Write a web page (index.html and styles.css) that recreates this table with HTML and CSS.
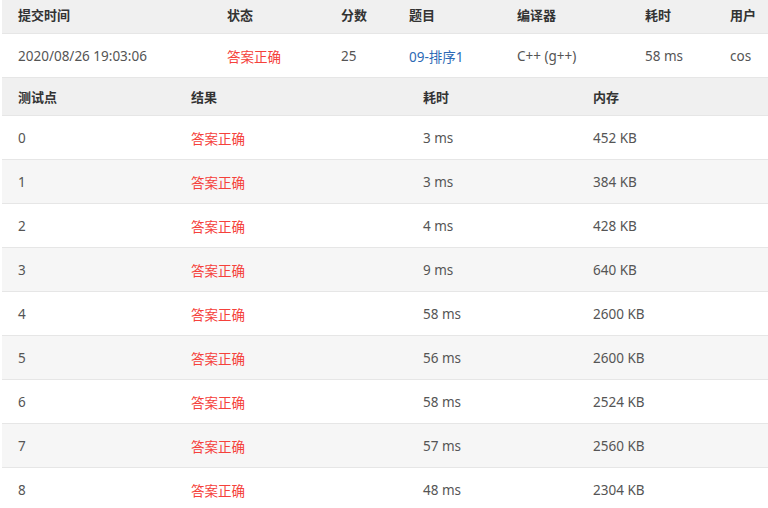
FILE: index.html
```html
<!DOCTYPE html>
<html lang="zh">
<head>
<meta charset="utf-8">
<title>提交详情</title>
<link rel="stylesheet" href="styles.css">
</head>
<body>
<div class="wrap">
  <table class="grid summary">
    <colgroup>
      <col class="c1"><col class="c2"><col class="c3"><col class="c4"><col class="c5"><col class="c6"><col>
    </colgroup>
    <thead>
      <tr><th>提交时间</th><th>状态</th><th>分数</th><th>题目</th><th>编译器</th><th>耗时</th><th>用户</th></tr>
    </thead>
    <tbody>
      <tr class="white"><td>2020/08/26 19:03:06</td><td class="ok">答案正确</td><td>25</td><td><a class="link" href="#">09-排序1</a></td><td>C++ (g++)</td><td>58 ms</td><td>cos</td></tr>
    </tbody>
  </table>
  <table class="grid cases">
    <colgroup>
      <col class="d1"><col class="d2"><col class="d3"><col>
    </colgroup>
    <thead>
      <tr><th>测试点</th><th>结果</th><th>耗时</th><th>内存</th></tr>
    </thead>
    <tbody>
      <tr><td>0</td><td class="ok">答案正确</td><td>3 ms</td><td>452 KB</td></tr>
      <tr><td>1</td><td class="ok">答案正确</td><td>3 ms</td><td>384 KB</td></tr>
      <tr><td>2</td><td class="ok">答案正确</td><td>4 ms</td><td>428 KB</td></tr>
      <tr><td>3</td><td class="ok">答案正确</td><td>9 ms</td><td>640 KB</td></tr>
      <tr><td>4</td><td class="ok">答案正确</td><td>58 ms</td><td>2600 KB</td></tr>
      <tr><td>5</td><td class="ok">答案正确</td><td>56 ms</td><td>2600 KB</td></tr>
      <tr><td>6</td><td class="ok">答案正确</td><td>58 ms</td><td>2524 KB</td></tr>
      <tr><td>7</td><td class="ok">答案正确</td><td>57 ms</td><td>2560 KB</td></tr>
      <tr><td>8</td><td class="ok">答案正确</td><td>48 ms</td><td>2304 KB</td></tr>
    </tbody>
  </table>
</div>
</body>
</html>
```
FILE: styles.css
```css
html, body {
  margin: 0;
  padding: 0;
  background: #fff;
  overflow: hidden;
}
body {
  font-family: "Noto Sans", "Noto Sans CJK SC", sans-serif;
  font-size: 13.5px;
  color: #555;
}
.wrap {
  margin: -4px 0 0 2px;
}
.grid {
  width: 766px;
  border-collapse: collapse;
  table-layout: fixed;
}
.grid th, .grid td {
  text-align: left;
  padding: 0 0 0 16px;
  white-space: nowrap;
  border-bottom: 1px solid #e6e6e6;
}
.grid th {
  height: 37px;
  background: #f0f0f0;
  color: #333;
  font-weight: bold;
  font-size: 13px;
}
.grid td {
  height: 43px;
}
.summary .c1 { width: 209px; }
.summary .c2 { width: 114px; }
.summary .c3 { width: 68px; }
.summary .c4 { width: 108px; }
.summary .c5 { width: 128px; }
.summary .c6 { width: 85px; }
.cases .d1 { width: 173px; }
.cases .d2 { width: 232px; }
.cases .d3 { width: 170px; }
.cases tbody tr:nth-child(even) td { background: #f6f6f6; }
.ok { color: #f5413b; }
.link { color: #2d6ab5; text-decoration: none; }
```
